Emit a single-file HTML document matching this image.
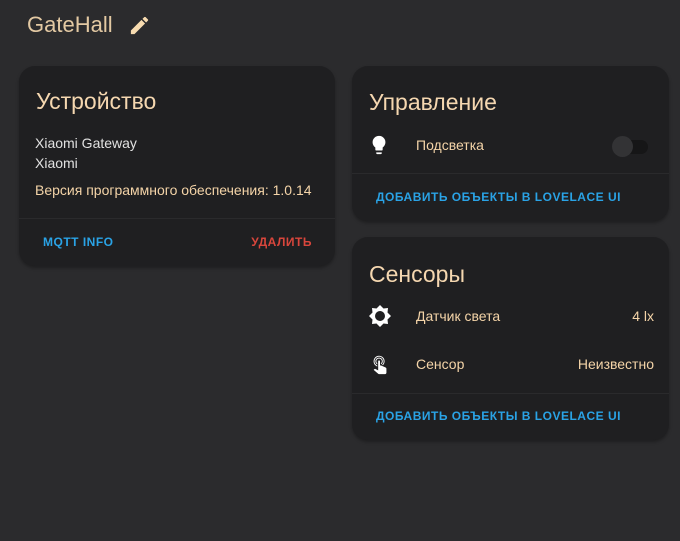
<!DOCTYPE html>
<html><head><meta charset="utf-8"><style>
*{margin:0;padding:0;box-sizing:border-box}
body{width:680px;height:541px;background:#2b2b2d;font-family:"Liberation Sans",sans-serif;position:relative;overflow:hidden;color:#e1e1e1}
.card{position:absolute;background:#1f1f21;border-radius:16px;box-shadow:0 2px 3px rgba(0,0,0,.3)}
.t{position:absolute;white-space:nowrap}
.h{font-size:23px;color:#f5d7b0}
.peach{color:#f4d4a8}
.btn{font-size:12px;font-weight:bold;letter-spacing:0.5px;color:#2aa3e6}
.div{position:absolute;left:0;right:0;height:1px;background:#2a2a2c}
</style></head><body>
<div class="t" style="left:27px;top:12px;font-size:22px;color:#e3c9a3">GateHall</div>
<svg style="position:absolute;left:128px;top:14px" width="23" height="23" viewBox="0 0 24 24"><path fill="#f8dcb0" d="M20.71 7.04c.39-.39.39-1.04 0-1.41l-2.34-2.34c-.37-.39-1.02-.39-1.41 0l-1.84 1.83 3.75 3.75M3 17.25V21h3.75L17.81 9.93l-3.75-3.75L3 17.25z"/></svg>

<div class="card" style="left:19px;top:66px;width:316px;height:200px">
 <div class="t h" style="left:17px;top:22px">Устройство</div>
 <div class="t" style="left:16px;top:69px;font-size:14px">Xiaomi Gateway</div>
 <div class="t" style="left:16px;top:89px;font-size:14px">Xiaomi</div>
 <div class="t peach" style="left:16px;top:116px;font-size:14px">Версия программного обеспечения: 1.0.14</div>
 <div class="div" style="top:152px"></div>
 <div class="t btn" style="left:24px;top:169px">MQTT INFO</div>
 <div class="t btn" style="right:23px;top:169px;color:#d9463c">УДАЛИТЬ</div>
</div>

<div class="card" style="left:352px;top:66px;width:317px;height:155px">
 <div class="t h" style="left:17px;top:23px">Управление</div>
 <svg style="position:absolute;left:16px;top:67px" width="22" height="24" viewBox="0 0 24 24"><path fill="#fff" d="M12 2a7 7 0 0 0-7 7c0 2.38 1.19 4.47 3 5.74V17a1 1 0 0 0 1 1h6a1 1 0 0 0 1-1v-2.26c1.81-1.27 3-3.36 3-5.74a7 7 0 0 0-7-7M9 21a1 1 0 0 0 1 1h4a1 1 0 0 0 1-1v-1H9v1z"/></svg>
 <div class="t peach" style="left:64px;top:71px;font-size:14px">Подсветка</div>
 <div style="position:absolute;left:262px;top:74px;width:34px;height:14px;border-radius:7px;background:#161617"></div>
 <div style="position:absolute;left:260px;top:70px;width:21px;height:21px;border-radius:50%;background:#333335"></div>
 <div class="div" style="top:107px"></div>
 <div class="t btn" style="left:24px;top:124px">ДОБАВИТЬ ОБЪЕКТЫ В LOVELACE UI</div>
</div>

<div class="card" style="left:352px;top:237px;width:317px;height:203px">
 <div class="t h" style="left:17px;top:24px">Сенсоры</div>
 <svg style="position:absolute;left:16px;top:67px" width="24" height="24" viewBox="0 0 24 24"><polygon fill="#fff" points="12,1 15.5,4.5 20,4 19.5,8.5 23,12 19.5,15.5 20,20 15.5,19.5 12,23 8.5,19.5 4,20 4.5,15.5 1,12 4.5,8.5 4,4 8.5,4.5"/><circle cx="12" cy="12" r="5" fill="#1f1f21"/></svg>
 <div class="t peach" style="left:64px;top:71px;font-size:14px">Датчик света</div>
 <div class="t peach" style="right:15px;top:71px;font-size:14px">4 lx</div>
 <svg style="position:absolute;left:17px;top:115px" width="22" height="24" viewBox="0 0 24 24"><path fill="#fff" d="M10 9a1 1 0 0 1 1-1 1 1 0 0 1 1 1v4.47l1.21.13 4.94 2.19c.53.24.85.77.85 1.350v4.36c-.03.82-.68 1.47-1.5 1.5H11c-.38 0-.74-.15-1-.43l-4.9-4.2.74-.77c.19-.21.46-.32.74-.32h.22L10 19V9m1-4a4 4 0 0 1 4 4c0 1.5-.8 2.77-2 3.46v-1.22c.61-.55 1-1.350 1-2.24a3 3 0 0 0-3-3 3 3 0 0 0-3 3c0 .89.39 1.69 1 2.24v1.22C7.8 11.77 7 10.5 7 9a4 4 0 0 1 4-4m0-2a6 6 0 0 1 6 6c0 1.7-.71 3.23-1.84 4.33l-1-.45A5.02 5.02 0 0 0 16 9a5 5 0 0 0-5-5 5 5 0 0 0-5 5c0 2.05 1.23 3.81 3 4.58v1.08C6.67 13.83 5 11.61 5 9a6 6 0 0 1 6-6z"/></svg>
 <div class="t peach" style="left:64px;top:119px;font-size:14px">Сенсор</div>
 <div class="t peach" style="right:15px;top:119px;font-size:14px">Неизвестно</div>
 <div class="div" style="top:156px"></div>
 <div class="t btn" style="left:24px;top:172px">ДОБАВИТЬ ОБЪЕКТЫ В LOVELACE UI</div>
</div>
</body></html>
